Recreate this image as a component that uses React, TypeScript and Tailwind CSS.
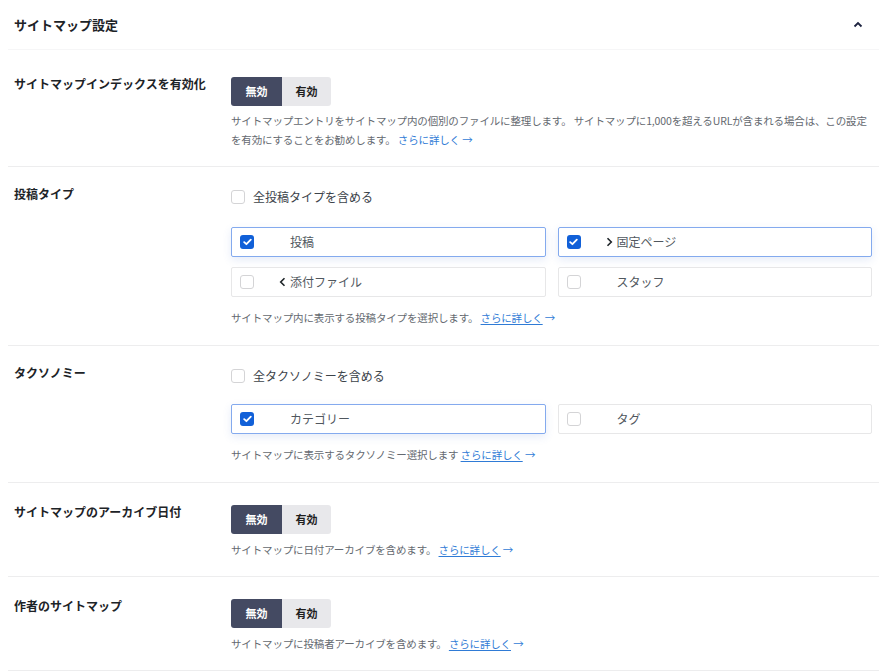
import React from 'react';

const font = { fontFamily: '"Noto Sans CJK JP", "Noto Sans", sans-serif' };

function Check({ checked }: { checked: boolean }) {
  if (checked) {
    return (
      <span className="flex h-[14px] w-[14px] shrink-0 items-center justify-center rounded-[3px] bg-[#1160d8]">
        <svg width="9" height="8" viewBox="0 0 9 8" fill="none">
          <path d="M1.2 4.2 3.4 6.2 7.8 1.6" stroke="white" strokeWidth="1.8" strokeLinecap="round" strokeLinejoin="round" />
        </svg>
      </span>
    );
  }
  return <span className="block h-[14px] w-[14px] shrink-0 rounded-[3px] border border-[#d4d4d6] bg-white" />;
}

function Toggle() {
  return (
    <div className="flex h-[29px] w-[100px] overflow-hidden rounded-[3px] text-[11px] font-bold">
      <span className="flex w-[51px] items-center justify-center bg-[#444a62] text-white">無効</span>
      <span className="flex flex-1 items-center justify-center bg-[#e8e8eb] text-[#1e1e1e]">有効</span>
    </div>
  );
}

function Desc({ children }: { children: React.ReactNode }) {
  return <p className="whitespace-nowrap text-[10.5px] leading-[19px] tracking-[-0.15px] text-[#646970]">{children}</p>;
}

function More({ underline = true }: { underline?: boolean }) {
  return (
    <span className="text-[#2f7bd6]">
      <span className={underline ? 'underline underline-offset-2' : ''}>さらに詳しく</span> →
    </span>
  );
}

function Chevron({ dir }: { dir: 'left' | 'right' }) {
  return (
    <svg width="7" height="10" viewBox="0 0 7 10" fill="none">
      <path
        d={dir === 'right' ? 'M1.5 1.2 5.3 5 1.5 8.8' : 'M5.5 1.2 1.7 5 5.5 8.8'}
        stroke="#1d2327"
        strokeWidth="1.6"
      />
    </svg>
  );
}

function Card({ label, checked, arrow }: { label: string; checked: boolean; arrow?: 'left' | 'right' }) {
  return (
    <div
      className={
        'flex h-[30px] items-center rounded-[2px] border pl-[8px] ' +
        (checked
          ? 'border-[#84aaee] shadow-[0_3px_8px_rgba(60,110,200,0.13)]'
          : 'border-[#e7e7e8]')
      }
    >
      <Check checked={checked} />
      <span className="flex w-[36px] justify-end pr-[4px]">{arrow && <Chevron dir={arrow} />}</span>
      <span className="text-[12px] text-[#50575e]">{label}</span>
    </div>
  );
}

function Row({ label, children, pt = 'pt-[22px]' }: { label: string; children: React.ReactNode; pt?: string }) {
  return (
    <div className={'flex border-b border-[#ededee] pl-[6px] pr-[7px] ' + pt}>
      <div className="w-[217px] shrink-0 text-[12px] font-bold leading-[14px] text-[#1d2327]">{label}</div>
      <div className="flex-1">{children}</div>
    </div>
  );
}

export default function App() {
  return (
    <main className="min-h-screen bg-white" style={font}>
      <div className="px-[8px]">
        <div className="flex h-[50px] items-center justify-between border-b border-[#f6f6f7] pl-[6px] pr-[16px]">
          <h2 className="text-[13px] font-bold text-[#1d2327]">サイトマップ設定</h2>
          <svg width="10" height="7" viewBox="0 0 10 7" fill="none">
            <path d="M1.5 5.5 5 2 8.5 5.5" stroke="#1d2340" strokeWidth="1.8" />
          </svg>
        </div>

        <Row label="サイトマップインデックスを有効化" pt="pt-[27px]">
          <div className="pb-[17px]">
            <Toggle />
            <div className="mt-[5px]">
              <Desc>
                サイトマップエントリをサイトマップ内の個別のファイルに整理します。 サイトマップに1,000を超えるURLが含まれる場合は、この設定
                <br />
                を有効にすることをお勧めします。 <More underline={false} />
              </Desc>
            </div>
          </div>
        </Row>

        <Row label="投稿タイプ" pt="pt-[20px]">
          <div className="pb-[18px]">
            <label className="flex h-[20px] items-center gap-[8px] text-[12px] text-[#3c434a]">
              <Check checked={false} />
              全投稿タイプを含める
            </label>
            <div className="mt-[20px] grid grid-cols-2 gap-x-[12px] gap-y-[10px]">
              <Card label="投稿" checked />
              <Card label="固定ページ" checked arrow="right" />
              <Card label="添付ファイル" checked={false} arrow="left" />
              <Card label="スタッフ" checked={false} />
            </div>
            <div className="mt-[11px]">
              <Desc>
                サイトマップ内に表示する投稿タイプを選択します。 <More />
              </Desc>
            </div>
          </div>
        </Row>

        <Row label="タクソノミー" pt="pt-[20px]">
          <div className="pb-[18px]">
            <label className="flex h-[20px] items-center gap-[8px] text-[12px] text-[#3c434a]">
              <Check checked={false} />
              全タクソノミーを含める
            </label>
            <div className="mt-[18px] grid grid-cols-2 gap-x-[12px]">
              <Card label="カテゴリー" checked />
              <Card label="タグ" checked={false} />
            </div>
            <div className="mt-[11px]">
              <Desc>
                サイトマップに表示するタクソノミー選択します <More />
              </Desc>
            </div>
          </div>
        </Row>

        <Row label="サイトマップのアーカイブ日付">
          <div className="pb-[17px]">
            <Toggle />
            <div className="mt-[6px]">
              <Desc>
                サイトマップに日付アーカイブを含めます。 <More />
              </Desc>
            </div>
          </div>
        </Row>

        <Row label="作者のサイトマップ">
          <div className="pb-[17px]">
            <Toggle />
            <div className="mt-[6px]">
              <Desc>
                サイトマップに投稿者アーカイブを含めます。 <More />
              </Desc>
            </div>
          </div>
        </Row>
      </div>
    </main>
  );
}
